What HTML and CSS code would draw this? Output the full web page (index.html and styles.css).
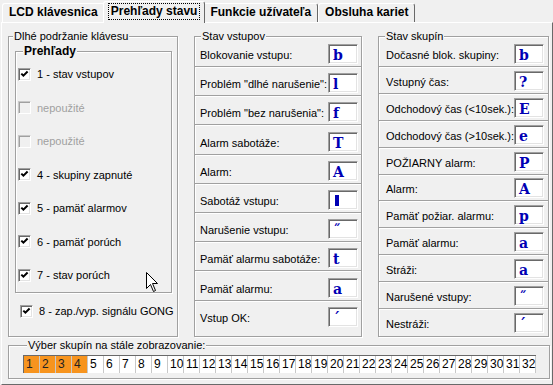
FILE: index.html
```html
<!DOCTYPE html>
<html lang="sk">
  <head>
    <meta charset="UTF-8" />
    <title>Prehľady stavu</title>
    <link rel="stylesheet" href="styles.css">
  </head>
  <body>
    <div class="window">
      <div class="tabs">
        <div class="tab">LCD klávesnica</div>
        <div class="tab active"><span class="focus">Prehľady stavu</span></div>
        <div class="tab">Funkcie užívateľa</div>
        <div class="tab">Obsluha kariet</div>
      </div>

      <div class="panel">
        <div class="top">
          <div class="group keys">
            <span class="title">Dlhé podržanie klávesu</span>
            <div class="group views">
              <span class="title bold">Prehľady</span>
              <div class="checks">
                <label class="check"><span class="box on"></span>1 - stav vstupov</label>
                <label class="check disabled"><span class="box"></span>nepoužité</label>
                <label class="check disabled"><span class="box"></span>nepoužité</label>
                <label class="check"><span class="box on"></span>4 - skupiny zapnuté</label>
                <label class="check"><span class="box on"></span>5 - pamäť alarmov</label>
                <label class="check"><span class="box on"></span>6 - pamäť porúch</label>
                <label class="check"><span class="box on"></span>7 - stav porúch</label>
              </div>
            </div>
            <label class="check gong"><span class="box on"></span>8 - zap./vyp. signálu GONG</label>
          </div>

          <div class="group inputs">
            <span class="title">Stav vstupov</span>
            <div class="rows"></div>
          </div>

          <div class="group parts">
            <span class="title">Stav skupín</span>
            <div class="rows"></div>
          </div>
        </div>

        <div class="group select">
          <span class="title">Výber skupín na stále zobrazovanie:</span>
          <div class="cells"></div>
        </div>
      </div>

      <svg class="cursor" width="12" height="20" viewBox="0 0 12 20">
        <path d="M0.5 0.5 L0.5 16.5 L4.5 12.5 L7.5 19.5 L9.5 18.5 L6.5 11.5 L11.5 11.5 Z" fill="#fff" stroke="#000" stroke-width="1"/>
      </svg>
    </div>

    <script>
      // znaky LCD pre jednotlivé stavy
      const vstupy = [
        ["Blokovanie vstupu:", "b"],
        ["Problém \"dlhé narušenie\":", "l"],
        ["Problém \"bez narušenia\":", "f"],
        ["Alarm sabotáže:", "T"],
        ["Alarm:", "A"],
        ["Sabotáž vstupu:", "|"],
        ["Narušenie vstupu:", "˝"],
        ["Pamäť alarmu sabotáže:", "t"],
        ["Pamäť alarmu:", "a"],
        ["Vstup OK:", "´"],
      ];

      const skupiny = [
        ["Dočasné blok. skupiny:", "b"],
        ["Vstupný čas:", "?"],
        ["Odchodový čas (<10sek.):", "E"],
        ["Odchodový čas (>10sek.):", "e"],
        ["POŽIARNY alarm:", "P"],
        ["Alarm:", "A"],
        ["Pamäť požiar. alarmu:", "p"],
        ["Pamäť alarmu:", "a"],
        ["Stráži:", "a"],
        ["Narušené vstupy:", "˝"],
        ["Nestráži:", "´"],
      ];

      const renderRows = (selector, data) => {
        let html = "";
        data.forEach(([text, znak]) => {
          const bar = znak === "|" ? `<span class="bar"></span>` : znak;
          html += `<div class="row"><span>${text.replace(/</g, "&lt;")}</span><span class="lcd">${bar}</span></div>`;
        });
        document.querySelector(selector).innerHTML = html;
      };

      renderRows(".inputs .rows", vstupy);
      renderRows(".parts .rows", skupiny);

      // bunky skupín 1 - 32, prvé štyri sú vybrané
      let cells = "";
      for (let i = 1; i <= 32; i++) {
        cells += `<span class="cell${i <= 4 ? " picked" : ""}">${i}</span>`;
      }
      document.querySelector(".cells").innerHTML = cells;

      document.querySelectorAll(".box.on").forEach((box) => {
        box.innerHTML = `<svg width="9" height="9" viewBox="0 0 9 9"><path d="M1.3 3.6 L3.4 5.7 L7.6 1.5" fill="none" stroke="#000" stroke-width="2"/></svg>`;
      });
    </script>
  </body>
</html>
```

FILE: styles.css
```css
* {
  margin: 0;
  padding: 0;
  box-sizing: border-box;
}

body {
  background: #f0f0f0;
  font-family: "Liberation Sans", Arial, sans-serif;
  font-size: 11px;
  color: #000;
}

.window {
  position: relative;
  width: 553px;
  height: 385px;
  overflow: hidden;
}

/* zalozky */
.tabs {
  display: flex;
  align-items: flex-end;
  height: 22px;
  padding-left: 2px;
}

.tab {
  height: 19px;
  padding: 0 6px;
  border: 1px solid #fff;
  border-right-color: #696969;
  border-bottom: none;
  border-radius: 3px 3px 0 0;
  font-size: 12px;
  font-weight: bold;
  line-height: 17px;
  white-space: nowrap;
}

.tab.active {
  position: relative;
  z-index: 1;
  height: 22px;
  margin: 0 -2px -1px;
  padding: 1px 4px 0;
  background: #f0f0f0;
}

.focus {
  display: inline-block;
  padding: 0 2px;
  border: 1px dotted #000;
  line-height: 15px;
}

.panel {
  height: 363px;
  margin-left: 1px;
  padding: 13px 2px 0 6px;
  border: 1px solid #fff;
  border-right-color: #696969;
  border-bottom-color: #696969;
}

/* skupiny */
.group {
  display: flex;
  flex-direction: column;
  align-items: flex-start;
  border: 1px solid #a0a0a0;
  box-shadow: 1px 1px 0 #fff, inset 1px 1px 0 #fff;
}

.title {
  margin: -8px 0 0 4px;
  padding: 0 1px;
  line-height: 14px;
  background: #f0f0f0;
  white-space: nowrap;
}

.bold {
  font-weight: bold;
  font-size: 12px;
}

.top {
  display: flex;
  column-gap: 16px;
  height: 301px;
}

.keys {
  width: 170px;
}

.views {
  width: 157px;
  margin: 8px 0 0 6px;
  padding: 0 0 10px 2px;
}

.views .title {
  margin-left: 5px;
}

.checks {
  display: flex;
  flex-direction: column;
  row-gap: 19.5px;
  margin-top: 9px;
}

.check {
  display: flex;
  align-items: center;
  column-gap: 6px;
  height: 14px;
  white-space: nowrap;
}

.check.disabled {
  color: #a0a0a0;
}

.gong {
  margin: 11px 0 0 11px;
}

.box {
  display: flex;
  align-items: center;
  justify-content: center;
  width: 13px;
  height: 13px;
  border: 1px solid;
  border-color: #a0a0a0 #fff #fff #a0a0a0;
  box-shadow: inset 1px 1px 0 #696969, inset -1px -1px 0 #e3e3e3;
  background: #fff;
}

.disabled .box {
  background: #f0f0f0;
  border-color: #c8c8c8 #fff #fff #c8c8c8;
  box-shadow: inset 1px 1px 0 #a0a0a0;
}

.inputs {
  width: 168px;
}

.parts {
  width: 171px;
}

.inputs .title,
.parts .title {
  margin-left: 6px;
}

.rows {
  display: flex;
  flex-direction: column;
  width: 100%;
  margin-top: 1px;
}

.inputs .rows {
  row-gap: 6.2px;
}

.parts .rows {
  row-gap: 3.9px;
}

.row {
  display: flex;
  justify-content: space-between;
  align-items: center;
  padding: 0 3px 2px 5px;
  border-bottom: 1px solid #a0a0a0;
  box-shadow: 0 1px 0 #fff;
  white-space: nowrap;
}

.parts .row {
  padding: 0 4px 2px 7px;
}

.row:last-child {
  border-bottom: none;
  box-shadow: none;
}

.row span:first-child {
  padding-top: 2px;
}

.lcd {
  display: flex;
  align-items: center;
  width: 30px;
  height: 20px;
  padding: 2px 0 0 4px;
  border: 1px solid;
  border-color: #a0a0a0 #fff #fff #a0a0a0;
  box-shadow: inset 1px 1px 0 #696969, inset -1px -1px 0 #e3e3e3;
  background: #fff;
  font-family: "DejaVu Serif", "Liberation Serif", serif;
  font-size: 14px;
  font-weight: bold;
  color: #0000b4;
}

.bar {
  width: 4px;
  height: 11px;
  margin-left: 2px;
  background: #0000b4;
}

/* vyber skupin */
.select {
  margin-top: 8px;
  padding: 0 0 5px 14px;
}

.cells {
  display: flex;
  margin-top: 3px;
  border-top: 1px solid #696969;
  border-left: 1px solid #696969;
}

.cell {
  width: 16px;
  height: 17px;
  padding-left: 2px;
  border-right: 1px solid #c8c8c8;
  background: #fff;
  font-size: 12px;
  line-height: 17px;
}

.cell.picked {
  background: #f7941e;
  color: #222;
}

.cursor {
  position: absolute;
  left: 146px;
  top: 272px;
}
```
